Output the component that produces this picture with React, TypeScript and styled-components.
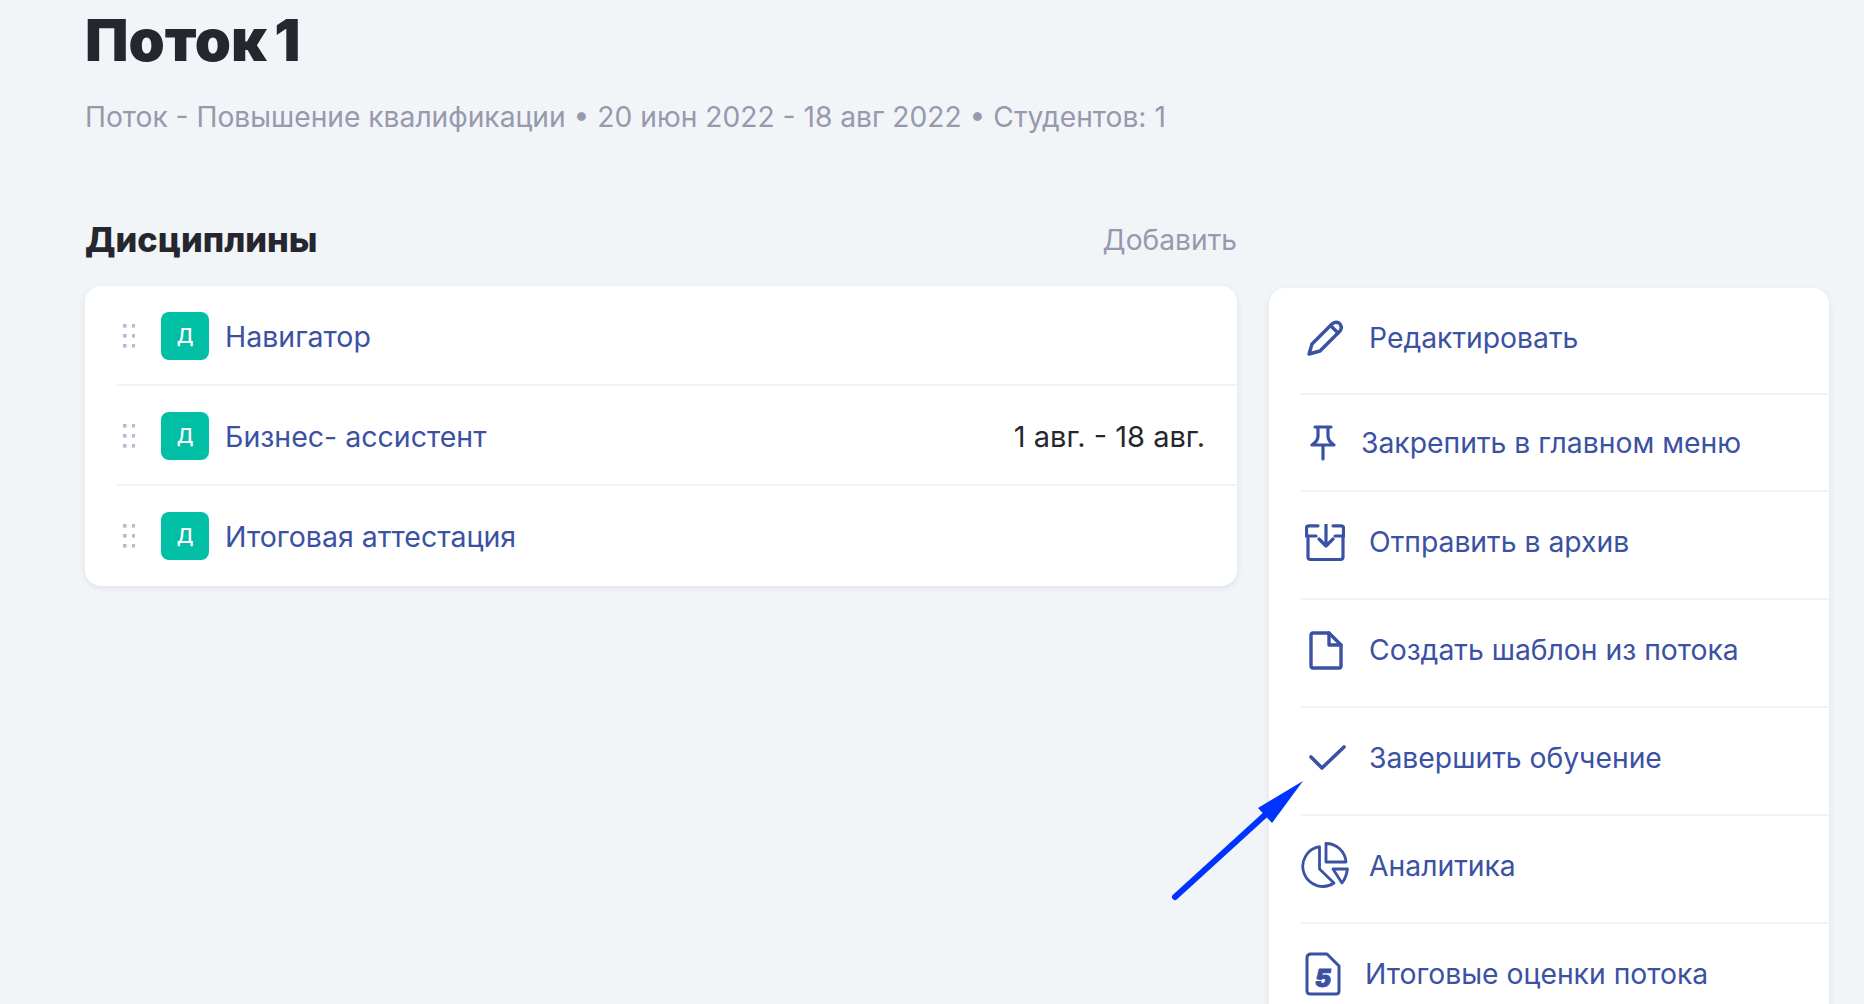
import React from "react";
import styled, { createGlobalStyle } from "styled-components";

const Global = createGlobalStyle`
  html, body { margin: 0; padding: 0; background: #f1f5f8; height: 100%; overflow: hidden; }
  body { font-family: Inter, "Noto Sans", sans-serif; }
`;

const Page = styled.div`
  position: relative;
  width: 1864px;
  height: 1004px;
  overflow: hidden;
  box-sizing: border-box;
  padding: 8px 35px 0 85px;
  background: #f1f5f8;
`;
const Title = styled.h1`
  margin: 0;
  font-size: 58px;
  line-height: 64px;
  font-weight: 900;
  word-spacing: -4px;
  color: #26272e;
`;
const Subtitle = styled.p`
  margin: 27px 0 0;
  font-size: 28.2px;
  line-height: 36px;
  color: #9799ad;
`;
const Columns = styled.div`
  display: flex;
  align-items: flex-start;
  gap: 32px;
  margin-top: 85px;
`;
const LeftColumn = styled.section`
  width: 1152px;
  flex: none;
`;
const SectionHead = styled.div`
  display: flex;
  justify-content: space-between;
  align-items: center;
  height: 40px;
`;
const SectionTitle = styled.h2`
  margin: 0;
  font-size: 34.3px;
  line-height: 40px;
  font-weight: 800;
  color: #26272e;
`;
const AddLink = styled.span`
  font-size: 28.2px;
  color: #9799ad;
`;
const Card = styled.div`
  margin-top: 26px;
  background: #fff;
  border-radius: 16px;
  box-shadow: 0 2px 6px rgba(60, 70, 110, 0.1);
  overflow: hidden;
`;
const Row = styled.div`
  display: flex;
  align-items: center;
  height: 100px;
  margin-left: 32px;
  padding: 0 32px 0 6px;
  box-sizing: border-box;
  &:not(:last-child) {
    padding-top: 2px;
    border-bottom: 2px solid #eff3f7;
  }
`;
const Badge = styled.span`
  display: flex;
  align-items: center;
  justify-content: center;
  width: 48px;
  height: 48px;
  margin-left: 26px;
  margin-right: 16px;
  border-radius: 8px;
  background: #00bfa5;
  color: #fff;
  font-size: 20px;
  font-weight: 500;
`;
const RowName = styled.span`
  flex: 1;
  font-size: 28.5px;
  color: #3b51a3;
`;
const RowDate = styled.span`
  font-size: 29px;
  color: #26272e;
`;
const Actions = styled.aside`
  flex: 1;
  margin-top: 68px;
  background: #fff;
  border-radius: 16px 16px 0 0;
  box-shadow: 0 2px 6px rgba(60, 70, 110, 0.1);
`;
const Action = styled.div<{ $h: number; $up: number }>`
  display: flex;
  align-items: center;
  height: ${(p) => p.$h}px;
  margin-left: 32px;
  padding-bottom: ${(p) => p.$up}px;
  box-sizing: border-box;
  & + & { border-top: 2px solid #eff3f7; }
`;
const IconSlot = styled.span<{ $w: number; $left: number }>`
  display: flex;
  flex: none;
  box-sizing: border-box;
  width: ${(p) => p.$w}px;
  padding-left: ${(p) => p.$left}px;
`;
const ActionLabel = styled.span`
  font-size: 28.3px;
  color: #3b51a3;
`;
const ArrowOverlay = styled.svg`
  position: absolute;
  left: 1165px;
  top: 770px;
`;

const stroke = { fill: "none", stroke: "#3b51a3", strokeLinecap: "round", strokeLinejoin: "round" } as const;

const Grip = () => (
  <svg width="12" height="25" viewBox="0 0 12 25" fill="#b6b9d2">
    {[0, 10, 20].map((y) => [0, 9].map((x) => <rect key={`${x}-${y}`} x={x} y={y} width="3.6" height="3.6" />))}
  </svg>
);
const Pencil = () => (
  <svg width="36" height="36" viewBox="0 0 36 36" strokeWidth="3.4" {...stroke}>
    <path d="M2 34 L5 24 L25 4 Q28.500 1 32 3 Q36 6.500 33 11 L13 31 Z" />
    <path d="M24 6 L31 13" />
  </svg>
);
const Pin = () => (
  <svg width="26" height="36" viewBox="0 0 26 36" strokeWidth="3.2" {...stroke}>
    <path d="M5 2 H21 M8 2 V11 Q8 16 2 20 H24 Q18 16 18 11 V2 M13 20 V34" />
  </svg>
);
const Archive = () => (
  <svg width="40" height="37" viewBox="0 0 40 37" strokeWidth="3.2" {...stroke}>
    <path d="M13 1.800 H4 Q1.500 1.800 1.500 4 V12 H11 M28 1.800 H36 Q38.500 1.800 38.500 4 V12 H30" />
    <path d="M3 12 V33 Q3 35.500 6 35.500 H35 Q38 35.500 38 33 V12" />
    <path d="M21 1 V22 M14 15 L21 22 L28 15" />
  </svg>
);
const FileIcon = () => (
  <svg width="34" height="39" viewBox="0 0 34 39" strokeWidth="3.4" {...stroke}>
    <path d="M4 2 H20 L32 14 V35 Q32 37 30 37 H4 Q2 37 2 35 V4 Q2 2 4 2 Z" />
    <path d="M20 2 V14 H32" />
  </svg>
);
const Check = () => (
  <svg width="37" height="26" viewBox="0 0 37 26" strokeWidth="3.6" {...stroke}>
    <path d="M2 12 L13 23 L35 2" />
  </svg>
);
const Pie = () => (
  <svg width="48" height="48" viewBox="0 0 48 48" strokeWidth="2.8" {...stroke}>
    <path d="M18.500 4.700 A20 20 0 1 0 33 41 L18.500 27 Z" />
    <path d="M25 1.500 V20 H45 A20 20 0 0 0 25 1.500 Z" />
    <path d="M32 27 H46.500 Q45 36 41 41 Z" />
  </svg>
);
const Grade = () => (
  <svg width="36" height="44" viewBox="0 0 36 44" strokeWidth="3" {...stroke}>
    <path d="M6 2 H22 L34 14 V39 Q34 42 31 42 H6 Q2 42 2 39 V6 Q2 2 6 2 Z" />
    <text x="18" y="35" fontFamily="Inter, sans-serif" fontSize="24" fontWeight="900" fontStyle="italic" textAnchor="middle" fill="#3b51a3" stroke="#3b51a3" strokeWidth="1">5</text>
  </svg>
);

const rows = [
  { name: "Навигатор", date: "" },
  { name: "Бизнес- ассистент", date: "1 авг. - 18 авг." },
  { name: "Итоговая аттестация", date: "" },
];
const actions = [
  { label: "Редактировать", h: 105, up: 6, w: 68, left: 6, icon: <Pencil /> },
  { label: "Закрепить в главном меню", h: 97, up: 0, w: 60, left: 9, icon: <Pin /> },
  { label: "Отправить в архив", h: 108, up: 6, w: 68, left: 4, icon: <Archive /> },
  { label: "Создать шаблон из потока", h: 108, up: 6, w: 68, left: 8, icon: <FileIcon /> },
  { label: "Завершить обучение", h: 108, up: 6, w: 68, left: 8, icon: <Check /> },
  { label: "Аналитика", h: 108, up: 6, w: 68, left: 0, icon: <Pie /> },
  { label: "Итоговые оценки потока", h: 108, up: 6, w: 64, left: 4, icon: <Grade /> },
];

export default function App() {
  return (
    <Page>
      <Global />
      <Title>Поток 1</Title>
      <Subtitle>Поток - Повышение квалификации • 20 июн 2022 - 18 авг 2022 • Студентов: 1</Subtitle>
      <Columns>
        <LeftColumn>
          <SectionHead>
            <SectionTitle>Дисциплины</SectionTitle>
            <AddLink>Добавить</AddLink>
          </SectionHead>
          <Card>
            {rows.map((r) => (
              <Row key={r.name}>
                <Grip />
                <Badge>Д</Badge>
                <RowName>{r.name}</RowName>
                {r.date && <RowDate>{r.date}</RowDate>}
              </Row>
            ))}
          </Card>
        </LeftColumn>
        <Actions>
          {actions.map((a) => (
            <Action key={a.label} $h={a.h} $up={a.up}>
              <IconSlot $w={a.w} $left={a.left}>{a.icon}</IconSlot>
              <ActionLabel>{a.label}</ActionLabel>
            </Action>
          ))}
        </Actions>
      </Columns>
      <ArrowOverlay width="150" height="140" viewBox="0 0 150 140">
        <path d="M10 127 L100 45" stroke="#0033ff" strokeWidth="6" strokeLinecap="round" fill="none" />
        <path d="M138 11 L93 38 L107 53 Z" fill="#0033ff" />
      </ArrowOverlay>
    </Page>
  );
}
